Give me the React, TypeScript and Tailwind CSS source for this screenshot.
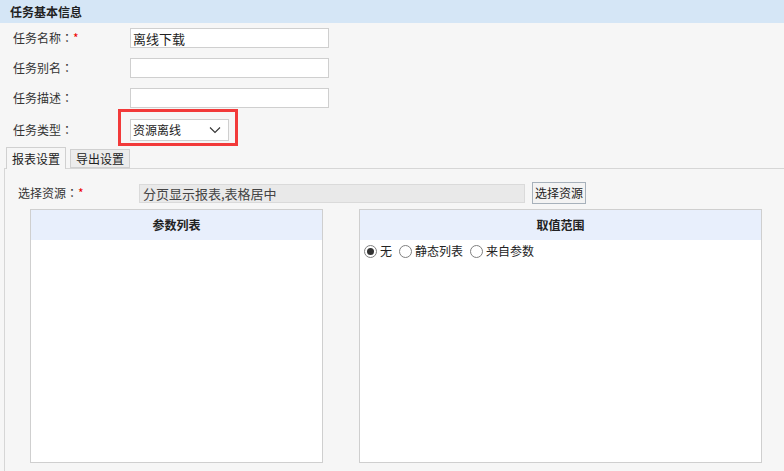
import React from "react";

function Radio({ checked }: { checked?: boolean }) {
  return (
    <span className="w-[13px] h-[13px] rounded-full border border-[#808080] bg-white flex items-center justify-center shrink-0">
      {checked && <span className="w-[7px] h-[7px] rounded-full bg-[#333]" />}
    </span>
  );
}

function Colon() {
  return <span className="font-['Noto_Sans_CJK_TC',sans-serif]">：</span>;
}

function FieldRow({ label, required, value, h = "h-[30px]" }: { label: string; required?: boolean; value?: string; h?: string }) {
  return (
    <div className={`flex items-center ${h}`}>
      <div className="w-[117px] shrink-0">
        {label}
        <Colon />
        {required && <span className="text-[#e00]">*</span>}
      </div>
      <div className="w-[199px] h-[20px] bg-white border border-[#cfcfcf] px-[2px] flex items-center text-[13px] text-[#222]">
        {value}
      </div>
    </div>
  );
}

export default function App() {
  return (
    <div className="w-[784px] h-[471px] overflow-hidden bg-[#f6f6f6] text-[12px] text-[#333] font-['Microsoft_YaHei','Noto_Sans_CJK_SC',sans-serif] leading-none">
      <div className="h-[23px] bg-[#d5e6f6] pl-[10px] flex items-center font-bold text-[#222]">任务基本信息</div>
      <div className="pl-[13px]">
        <FieldRow label="任务名称" required value="离线下载" />
        <FieldRow label="任务别名" />
        <FieldRow label="任务描述" />
        <div className="flex items-center h-[34px]">
          <div className="w-[117px] shrink-0">
            任务类型
            <Colon />
          </div>
          <div className="relative">
            <div className="w-[99px] h-[22px] bg-white border border-[#cfcfcf] pl-[2px] pr-[6px] flex items-center justify-between text-[12px] text-[#222]">
              <span>资源离线</span>
              <svg width="12" height="8" viewBox="0 0 12 8" className="mr-[1px]">
                <path d="M1 1.5 L6 6.5 L11 1.5" fill="none" stroke="#333" strokeWidth="1.1" />
              </svg>
            </div>
            <div className="absolute left-[-12px] top-[-10px] w-[120px] h-[37px] border-[3px] border-[#f23a3a] pointer-events-none" />
          </div>
        </div>
      </div>
      <div className="flex items-end h-[21px] pl-[6px] gap-[4px]">
        <div className="w-[60px] h-[22px] -mb-px bg-[#f6f6f6] border border-b-0 border-[#d0d0d0] flex items-center justify-center text-[12px] text-[#222] relative z-10">报表设置</div>
        <div className="w-[60px] h-[19px] bg-[#ececec] border border-[#d0d0d0] flex items-center justify-center text-[12px] text-[#222]">导出设置</div>
      </div>
      <div className="ml-[4px] border-l border-t border-[#d6d6d6] h-[310px]">
        <div className="flex items-center mt-[13px] pl-[13px] h-[22px]">
          <div className="w-[121px] shrink-0">
            选择资源
            <Colon />
            <span className="text-[#e00]">*</span>
          </div>
          <div className="w-[386px] h-[19px] bg-[#e9e9e9] border border-[#dadada] pl-[3px] flex items-center text-[13px] text-[#444]">分页显示报表,表格居中</div>
          <div className="ml-[7px] w-[54px] h-[22px] bg-[#f3f3f3] border border-[#a7b1bb] flex items-center justify-center text-[12px] text-[#222]">选择资源</div>
        </div>
        <div className="flex mt-[5px] pl-[25px] gap-[36px]">
          <div className="w-[293px] h-[254px] bg-white border border-[#cfcfcf]">
            <div className="h-[30px] bg-[#e8effc] flex items-center justify-center font-bold text-[#222]">参数列表</div>
          </div>
          <div className="w-[403px] h-[254px] bg-white border border-[#cfcfcf]">
            <div className="h-[30px] bg-[#e8effc] flex items-center justify-center font-bold text-[#222]">取值范围</div>
            <div className="flex items-center h-[22px] pl-[4px] text-[12px] text-[#222]">
              <Radio checked />
              <span className="ml-[3px]">无</span>
              <span className="ml-[7px]"><Radio /></span>
              <span className="ml-[3px]">静态列表</span>
              <span className="ml-[7px]"><Radio /></span>
              <span className="ml-[3px]">来自参数</span>
            </div>
          </div>
        </div>
      </div>
    </div>
  );
}
